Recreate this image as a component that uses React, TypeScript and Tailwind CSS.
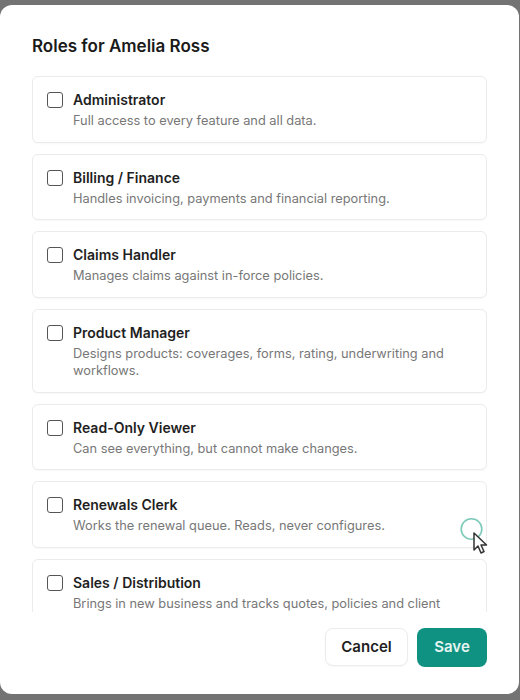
import React from "react";

const roles = [
  { name: "Administrator", desc: "Full access to every feature and all data." },
  { name: "Billing / Finance", desc: "Handles invoicing, payments and financial reporting." },
  { name: "Claims Handler", desc: "Manages claims against in-force policies." },
  { name: "Product Manager", desc: "Designs products: coverages, forms, rating, underwriting and workflows." },
  { name: "Read-Only Viewer", desc: "Can see everything, but cannot make changes." },
  { name: "Renewals Clerk", desc: "Works the renewal queue. Reads, never configures." },
  { name: "Sales / Distribution", desc: "Brings in new business and tracks quotes, policies and client relationships." },
];

export default function App() {
  return (
    <div
      className="h-[700px] w-[520px] bg-[#737373] pt-[5px] overflow-hidden"
      style={{ fontFamily: "Inter, 'Noto Sans', sans-serif" }}
    >
      <div className="relative flex h-[689px] w-[519px] flex-col rounded-[12px] bg-white px-[32px] pt-[29px] pb-[27px]">
        <h2 className="mb-[18px] text-[17px] leading-[24px] font-semibold text-[#1a1a1a]">
          Roles for Amelia Ross
        </h2>
        <div className="flex h-[536px] flex-col gap-[11px] overflow-hidden">
          {roles.map((r) => (
            <label
              key={r.name}
              className="flex shrink-0 items-start gap-[10px] rounded-[6px] border border-[#ebebeb] bg-white pt-[13px] pb-[12.7px] pl-[14px] pr-[14px] shadow-[0_1px_2px_rgba(0,0,0,0.03)]"
            >
              <span className="mt-[2px] block h-[16px] w-[16px] shrink-0 rounded-[3px] border-[1.5px] border-[#555]" />
              <span className="flex flex-col">
                <span className="text-[14px] leading-[20px] font-semibold text-[#1f1f1f]">{r.name}</span>
                <span className="mt-[2px] text-[12.8px] leading-[17px] text-[#777]">{r.desc}</span>
              </span>
            </label>
          ))}
        </div>
        <div className="mt-auto flex justify-end gap-[9px]">
          <button className="h-[38px] w-[83px] rounded-[8px] border border-[#ececec] bg-white text-[15px] font-semibold text-[#1f1f1f] shadow-[0_1px_2px_rgba(0,0,0,0.04)]">
            Cancel
          </button>
          <button className="h-[39px] w-[70px] rounded-[8px] bg-[#109283] text-[15px] font-semibold text-[#e6f5f2]">
            Save
          </button>
        </div>
        <svg className="absolute left-[458px] top-[512px]" width="34" height="42" viewBox="0 0 34 42">
          <circle cx="13.5" cy="12" r="10.3" fill="none" stroke="#7cc9b8" strokeWidth="1.6" />
          <path d="M16 16 L16 33 L20 29 L23 36 L26 34.5 L23 28 L28.5 28 Z" fill="#fff" stroke="#333" strokeWidth="1.5" strokeLinejoin="round" />
        </svg>
      </div>
    </div>
  );
}
